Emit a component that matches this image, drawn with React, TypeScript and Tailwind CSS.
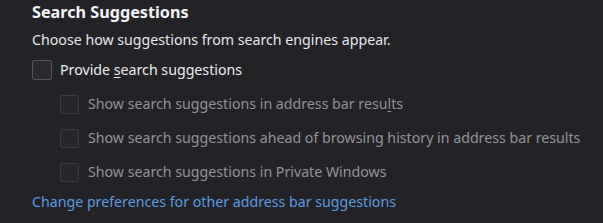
import React from 'react';

const rows = [
    'Show search suggestions in address bar results',
    'Show search suggestions ahead of browsing history in address bar results',
    'Show search suggestions in Private Windows',
];

const Box: React.FC<{ dim?: boolean }> = ({ dim }) => (
    <span
        className={
            dim
                ? 'w-[19px] h-[19px] shrink-0 rounded-[2px] border border-[#3a3a40] bg-[#26262b]'
                : 'w-[20px] h-[20px] shrink-0 rounded-[2px] border border-[#56565c] bg-[#2a2a2f]'
        }
    />
);

export default function App() {
    return (
        <div
            className="w-[603px] h-[223px] bg-[#232327] pl-[32px] overflow-hidden"
            style={{ fontFamily: '"Noto Sans", "Open Sans", sans-serif' }}
        >
            <h1 className="text-[16.2px] font-bold text-[#f4f4f6] leading-[24px]">Search Suggestions</h1>
            <p className="text-[14.2px] text-[#e6e6ea] leading-[20px] mt-[6px]">
                Choose how suggestions from search engines appear.
            </p>
            <label className="flex items-center gap-[8px] mt-[10px] h-[20px]">
                <Box />
                <span className="text-[14.2px] text-[#ececef] whitespace-nowrap">
                    Provide <span className="underline underline-offset-2">s</span>earch suggestions
                </span>
            </label>
            <div className="pl-[28px] mt-[14px] flex flex-col gap-[14px]">
                {rows.map((r, i) => (
                    <div key={i} className="flex items-center gap-[9px] h-[20px]">
                        <Box dim />
                        <span className="text-[14.2px] text-[#939398] whitespace-nowrap">
                            {i === 0 ? (
                                <>
                                    Show search suggestions in address bar resu<span className="underline underline-offset-2">l</span>ts
                                </>
                            ) : (
                                r
                            )}
                        </span>
                    </div>
                ))}
            </div>
            <a className="block mt-[10px] text-[14.2px] text-[#5a9be0] leading-[20px]">
                Change preferences for other address bar suggestions
            </a>
        </div>
    );
}
